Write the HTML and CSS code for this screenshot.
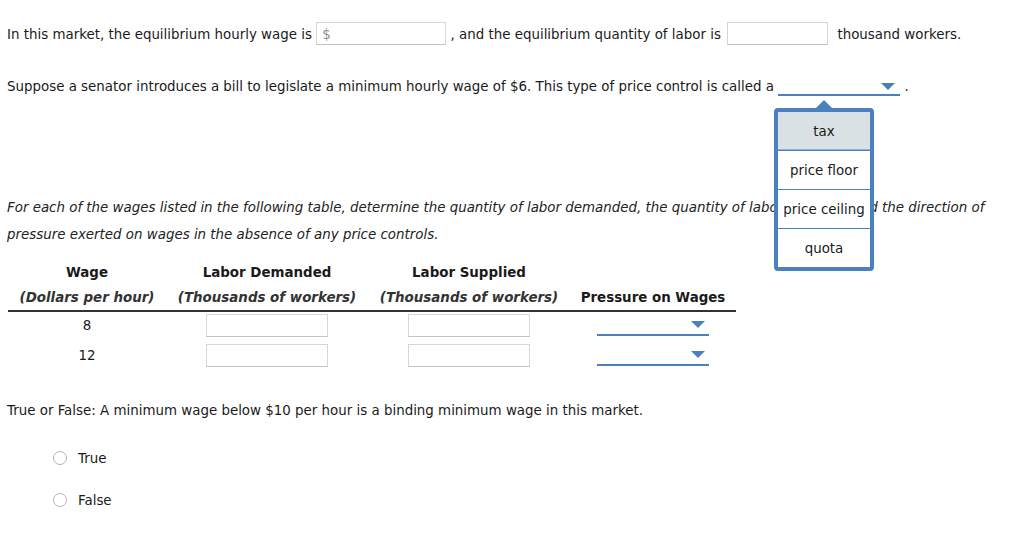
FILE: index.html
```html
<!DOCTYPE html>
<html>
<head>
<meta charset="utf-8">
<link rel="stylesheet" href="styles.css">
</head>
<body>
<div class="page">
  <p class="q1">In this market, the equilibrium hourly wage is <span class="box box-wage"><span class="dollar">$</span></span> , and the equilibrium quantity of labor is <span class="box box-qty"></span> thousand workers.</p>

  <p class="q2">Suppose a senator introduces a bill to legislate a minimum hourly wage of $6. This type of price control is called a <span class="dd dd-main"><span class="tri"></span></span> .</p>

  <div class="popup">
    <div class="opt opt-sel">tax</div>
    <div class="opt">price floor</div>
    <div class="opt">price ceiling</div>
    <div class="opt">quota</div>
  </div>

  <p class="q3">For each of the wages listed in the following table, determine the quantity of labor demanded, the quantity of labor supplied, and the direction of pressure exerted on wages in the absence of any price controls.</p>

  <table class="tbl">
    <thead>
      <tr class="h1">
        <th class="c1">Wage</th>
        <th class="c2">Labor Demanded</th>
        <th class="c3">Labor Supplied</th>
        <th class="c4"></th>
      </tr>
      <tr class="h2">
        <th><em>(Dollars per hour)</em></th>
        <th><em>(Thousands of workers)</em></th>
        <th><em>(Thousands of workers)</em></th>
        <th>Pressure on Wages</th>
      </tr>
    </thead>
    <tbody>
      <tr class="r1">
        <td>8</td>
        <td><span class="box box-cell"></span></td>
        <td><span class="box box-cell"></span></td>
        <td><span class="dd dd-cell"><span class="tri"></span></span></td>
      </tr>
      <tr class="r2">
        <td>12</td>
        <td><span class="box box-cell"></span></td>
        <td><span class="box box-cell"></span></td>
        <td><span class="dd dd-cell"><span class="tri"></span></span></td>
      </tr>
    </tbody>
  </table>

  <p class="q4">True or False: A minimum wage below $10 per hour is a binding minimum wage in this market.</p>

  <div class="radios">
    <label class="radio"><span class="circle"></span>True</label>
    <label class="radio"><span class="circle"></span>False</label>
  </div>
</div>
</body>
</html>
```

FILE: styles.css
```css
html, body {
  margin: 0;
  padding: 0;
  background: #fff;
}
body {
  font-family: "DejaVu Sans", Verdana, sans-serif;
  font-size: 13.4px;
  color: #1a1a1a;
}
.page {
  position: relative;
  width: 1024px;
  height: 534px;
  overflow: hidden;
}
p { margin: 0; }

.q1 {
  margin: 23px 0 0 7px;
  height: 23px;
  line-height: 23px;
  white-space: nowrap;
}
.box {
  display: inline-block;
  vertical-align: middle;
  box-sizing: border-box;
  height: 23px;
  border: 1px solid #d6d6d6;
  border-bottom-color: #c4c4c4;
  background: #fff;
}
.box-wage { width: 130px; margin-top: -4px; }
.box-qty { width: 101px; margin: -4px 5px 0 2px; }
.dollar {
  color: #8f8f8f;
  padding-left: 5px;
  line-height: 20px;
}

.q2 {
  margin: 30px 0 0 7px;
  height: 22px;
  line-height: 22px;
  white-space: nowrap;
}
.dd {
  display: inline-block;
  position: relative;
  box-sizing: border-box;
  border-bottom: 2px solid #4a80bd;
}
.dd-main {
  width: 122px;
  height: 18px;
  vertical-align: -5px;
}
.tri {
  position: absolute;
  right: 5px;
  top: 5px;
  width: 0;
  height: 0;
  border-left: 7px solid transparent;
  border-right: 7px solid transparent;
  border-top: 7px solid #4a80bd;
}

.popup {
  position: absolute;
  left: 774px;
  top: 108px;
  width: 100px;
  box-sizing: border-box;
  border: 4px solid #4a80bd;
  border-radius: 4px;
  background: #fff;
  z-index: 2;
}
.popup::before {
  content: "";
  position: absolute;
  left: 38px;
  top: -12px;
  border-left: 8px solid transparent;
  border-right: 8px solid transparent;
  border-bottom: 8px solid #4a80bd;
}
.opt {
  height: 38px;
  line-height: 39px;
  text-align: center;
  border-top: 1px solid #4a80bd;
  color: #1a1a1a;
  white-space: nowrap;
}
.opt:first-child { border-top: 0; }
.opt-sel {
  background: #d9e1e4;
  border-bottom: 1px solid #8fb0d8;
  height: 37px;
}

.q3 {
  margin: 96px 0 0 7px;
  width: 985px;
  line-height: 27px;
  font-style: italic;
  color: #222;
}

.tbl {
  margin: 10px 0 0 8px;
  border-collapse: collapse;
}
.tbl th {
  text-align: center;
  font-weight: bold;
  white-space: nowrap;
  line-height: 18px;
  vertical-align: top;
}
.tbl th em { color: #333; }
.c1 { width: 158px; }
.c2 { width: 202px; }
.c3 { width: 202px; }
.c4 { width: 166px; }
.h1 th { padding: 6px 0 2px; }
.h2 th {
  padding: 5px 0 3px;
  border-bottom: 2px solid #333;
}
.tbl td {
  padding: 0;
  text-align: center;
  vertical-align: middle;
}
.r1 td { height: 27px; }
.r2 td { height: 32px; }
.box-cell { width: 122px; }
.dd-cell {
  width: 112px;
  height: 21px;
  vertical-align: middle;
}
.dd-cell .tri { top: 6px; right: 4px; }

.q4 {
  margin: 30px 0 0 7px;
  line-height: 20px;
}

.radios {
  margin: 27px 0 0 53px;
  display: flex;
  flex-direction: column;
  gap: 22px;
}
.radio {
  display: flex;
  align-items: center;
  gap: 11px;
  height: 20px;
}
.circle {
  width: 14px;
  height: 14px;
  box-sizing: border-box;
  border: 1px solid #b3b3b3;
  border-radius: 50%;
  background: #fff;
}
```
